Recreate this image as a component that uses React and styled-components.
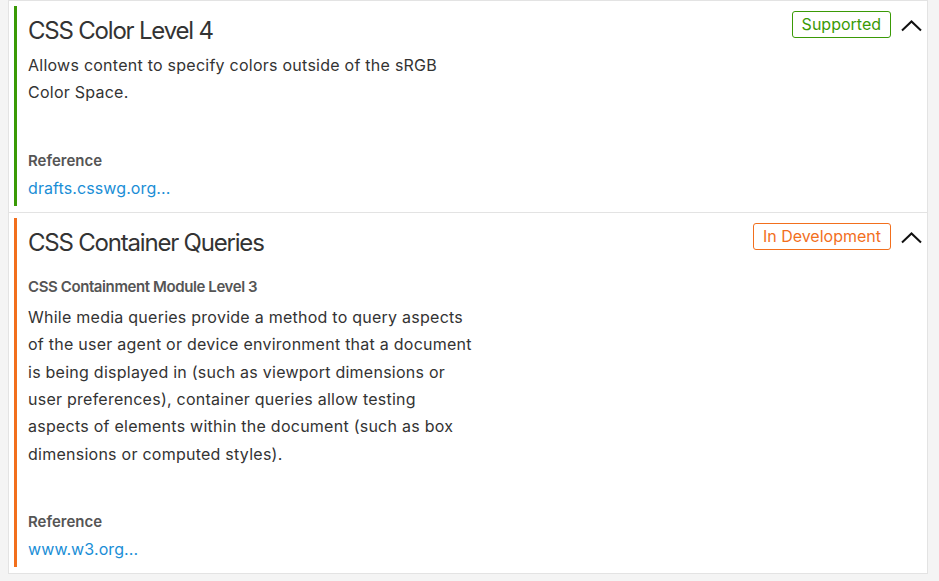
import React from 'react'
import styled, { createGlobalStyle } from 'styled-components'

const GlobalStyle = createGlobalStyle`
body{
    margin:0;
    background:#f4f4f4;
    font-family:Inter, "Noto Sans", sans-serif;
    color:#333;
}
`

const features = [
    {
        title: 'CSS Color Level 4',
        status: 'Supported',
        color: '#3a9a06',
        desc: 'Allows content to specify colors outside of the sRGB Color Space.',
        link: 'drafts.csswg.org...'
    },
    {
        title: 'CSS Container Queries',
        subtitle: 'CSS Containment Module Level 3',
        status: 'In Development',
        color: '#f26f1d',
        desc: 'While media queries provide a method to query aspects of the user agent or device environment that a document is being displayed in (such as viewport dimensions or user preferences), container queries allow testing aspects of elements within the document (such as box dimensions or computed styles).',
        link: 'www.w3.org...'
    }
]

function Chevron() {
    return (
        <svg width="21" height="13" viewBox="0 0 21 13">
            <polyline points="1,11.5 10.5,2.5 20,11.5" fill="none" stroke="#111" strokeWidth="2" />
        </svg>
    )
}

function FeatureCard({ f }) {
    return (
        <Card>
            <Inner color={f.color}>
                <Header>
                    <Title>{f.title}</Title>
                    <Actions>
                        <Badge color={f.color}>{f.status}</Badge>
                        <Toggle><Chevron /></Toggle>
                    </Actions>
                </Header>
                {f.subtitle && <Subtitle>{f.subtitle}</Subtitle>}
                <Desc>{f.desc}</Desc>
                <Label>Reference</Label>
                <Link>{f.link}</Link>
            </Inner>
        </Card>
    )
}

export default function App() {
    return (
        <>
            <GlobalStyle />
            <List>
                {features.map(f => <FeatureCard key={f.title} f={f} />)}
            </List>
        </>
    )
}

const List = styled.div`
margin-left:8px;
width:918px;
background:#fff;
border:1px solid #e3e3e3;
`
const Card = styled.div`
padding:5px 0 6px;
border-bottom:1px solid #e3e3e3;
&:last-child{
    border-bottom:none;
}
`
const Inner = styled.div`
margin-left:5px;
border-left:3px solid ${p => p.color};
padding:0 5px 0 11px;
`
const Header = styled.div`
display:flex;
justify-content:space-between;
align-items:flex-start;
`
const Title = styled.h2`
margin:10px 0 0;
font-size:24px;
font-weight:400;
letter-spacing:-1.2px;
line-height:29px;
color:#333;
`
const Actions = styled.div`
display:flex;
align-items:center;
gap:10px;
margin-top:5px;
`
const Badge = styled.span`
border:1px solid ${p => p.color};
color:${p => p.color};
border-radius:3px;
font-size:16px;
line-height:25px;
padding:0 9px;
`
const Toggle = styled.span`
display:flex;
align-items:center;
padding-top:2px;
`
const Subtitle = styled.div`
margin-top:20px;
font-size:15px;
font-weight:600;
letter-spacing:-0.4px;
color:#555;
line-height:20px;
`
const Desc = styled.p`
margin:7px 0 0;
max-width:450px;
font-size:16px;
letter-spacing:0.25px;
line-height:27.4px;
color:#333;
`
const Label = styled.div`
margin-top:44px;
font-size:15px;
font-weight:600;
color:#555;
line-height:20px;
`
const Link = styled.a`
display:block;
margin-top:7px;
padding-bottom:8px;
font-size:16px;
letter-spacing:0.1px;
line-height:20px;
color:#1a8ed6;
cursor:pointer;
`
